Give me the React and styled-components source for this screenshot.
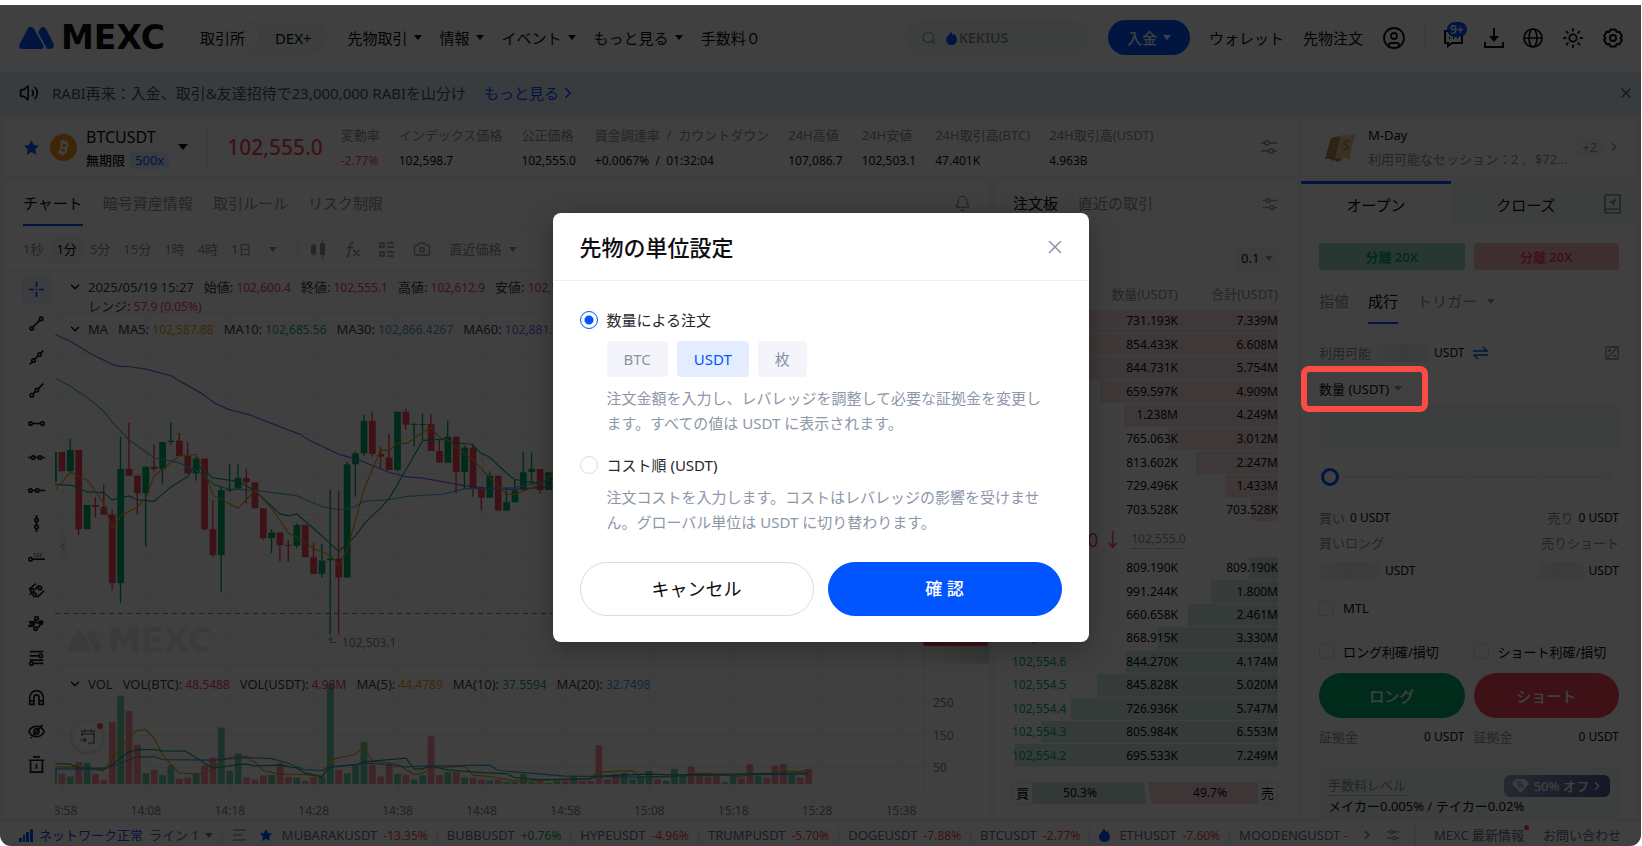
import React, {useState} from 'react';
import styled, {createGlobalStyle} from 'styled-components';
import {
  Bell, Camera, ChevronDown, ChevronRight, CircleUser, Globe, Search, Sun, Volume2, X,
} from 'lucide-react';

const colors = {
  text: '#0d0d12',
  sub: '#8a93a3',
  line: '#eef0f4',
  fill: '#f2f6f5',
  blue: '#0055ff',
  green: '#03ad6b',
  red: '#f6465d',
}

const GlobalStyle = createGlobalStyle`
    * { box-sizing: border-box; }
    body {
        margin: 0;
        background: #fff;
        color: ${colors.text};
        font-family: 'Noto Sans', 'Noto Sans CJK JP', sans-serif;
        font-size: 13px;
        line-height: 18px;
    }
    button, input, select { font: inherit; color: inherit; }
    button { border: 0; padding: 0; background: none; cursor: pointer; white-space: nowrap; }
    a { color: inherit; text-decoration: none; white-space: nowrap; }
    svg { display: block; flex: none; }
`;

const Page = styled.div`
    height: 100vh;
    padding: 5px 1px 0 0;
    background: #fff;
`;
const Window = styled.div`
    position: relative;
    display: flex;
    flex-direction: column;
    height: 100%;
    overflow: hidden;
    border-radius: 0 0 11px 11px;
    background: #f5f6f8;
`;
const Caret = styled.span`
    flex: none;
    width: 0;
    height: 0;
    border: ${({$size}) => $size || 4}px solid transparent;
    border-top: ${({$size}) => ($size || 4) + 1}px solid ${({$color}) => $color || 'currentColor'};
    border-bottom: 0;
`;
const Divider = styled.span`
    flex: none;
    width: 1px;
    height: ${({$h}) => $h}px;
    background: #e6e8ed;
`;
const Spacer = styled.span`
    flex: 1;
`;

/* header */
const Header = styled.header`
    display: flex;
    align-items: center;
    flex: none;
    height: 67px;
    padding: 0 18px 2px 19px;
    background: #fff;
    font-size: 15px;
    line-height: 22px;
    white-space: nowrap;
`;
const Brand = styled.a`
    display: flex;
    align-items: center;
    gap: 7px;
    font: 700 33px/32px 'DejaVu Sans', sans-serif;
    margin-right: 20px;
`;
const Switch = styled.div`
    display: flex;
    border-radius: 16px;
    background: ${colors.fill};
`;
const SwitchItem = styled.a`
    padding: 4px 14px;
    border: 1px solid ${({$active}) => ($active ? colors.line : 'transparent')};
    border-radius: 16px;
    background: ${({$active}) => ($active ? '#fff' : 'transparent')};
`;
const Nav = styled.nav`
    display: flex;
    gap: 18px;
    margin-left: 21px;
`;
const NavItem = styled.a`
    display: flex;
    align-items: center;
    gap: 6px;
`;
const SearchBox = styled.label`
    display: flex;
    align-items: center;
    width: 185px;
    height: 34px;
    padding: 0 16px;
    border-radius: 17px;
    background: ${colors.fill};
    color: ${colors.sub};
    gap: 9px;
`;
const SearchInput = styled.input`
    width: 100px;
    margin-left: -7px;
    padding: 0;
    border: 0;
    background: none;
    outline: 0;
    font-weight: 600;
    font-size: 14px;
    &::placeholder { color: ${colors.sub}; opacity: 1; }
`;
const Deposit = styled.button`
    display: flex;
    align-items: center;
    gap: 6px;
    height: 35px;
    margin: 0 19px 0 18px;
    padding: 0 19px;
    border-radius: 18px;
    background: ${colors.blue};
    color: #fff;
    font-weight: 500;
`;
const HeaderLinks = styled.div`
    display: flex;
    align-items: center;
    gap: 19px;
    margin-right: 18px;
`;
const HeaderIcons = styled.div`
    display: flex;
    align-items: center;
    gap: 19px;
    margin-left: 18px;
`;
const IconButton = styled.button`
    position: relative;
    display: flex;
    color: ${({$color}) => $color || 'inherit'};
`;
const Count = styled.span`
    position: absolute;
    left: 4px;
    top: -6px;
    padding: 0 3px;
    border-radius: 8px;
    background: ${colors.blue};
    color: #fff;
    font-size: 12px;
    font-weight: 600;
    line-height: 15px;
`;

/* announcement */
const Notice = styled.div`
    display: flex;
    align-items: center;
    flex: none;
    height: 43px;
    padding: 0 7px 2px 19px;
    background: #e0edfc;
    font-size: 15px;
    line-height: 22px;
    white-space: nowrap;
`;
const NoticeText = styled.span`
    margin: 0 18px 0 13px;
    color: #4c525e;
`;
const MoreLink = styled.a`
    display: flex;
    align-items: center;
    color: ${colors.blue};
`;

/* workspace */
const Workspace = styled.main`
    display: grid;
    grid-template-columns: minmax(0, 1fr) 303px 336px;
    grid-template-rows: 58px minmax(0, 1fr);
    gap: 5px 4px;
    flex: 1;
    min-height: 0;
    padding: 3px 4px 0;
`;
const Ticker = styled.section`
    display: flex;
    align-items: center;
    grid-column: span 2;
    padding: 0 19px 0 19px;
    background: #fff;
    white-space: nowrap;
`;
const Symbol = styled.div`
    display: flex;
    flex-direction: column;
    gap: 4px;
    margin: 0 9px 0 9px;
`;
const SymbolName = styled.h1`
    margin: 0;
    font-size: 16px;
    font-weight: 400;
    line-height: 22px;
`;
const SymbolMeta = styled.div`
    display: flex;
    gap: 5px;
    font-weight: 500;
    line-height: 17px;
`;
const Leverage = styled.span`
    padding: 0 5px;
    border-radius: 3px;
    background: #e3eeff;
    color: ${colors.blue};
    font-weight: 400;
`;
const LastPrice = styled.strong`
    margin: 0 18px 0 19px;
    color: ${colors.red};
    font-size: 21px;
    font-weight: 500;
    line-height: 30px;
`;
const Stats = styled.dl`
    display: flex;
    gap: 19px;
    margin: 0;
    padding-top: 2px;
`;
const StatLabel = styled.dt`
    color: ${colors.sub};
    line-height: 25px;
`;
const StatValue = styled.dd`
    margin: 0;
    color: ${({$color}) => $color || colors.text};
    font-size: 12px;
    line-height: 25px;
`;
const Promo = styled.section`
    display: flex;
    align-items: center;
    padding: 0 16px 0 24px;
    background: #fff;
`;
const PromoText = styled.div`
    flex: 1;
    min-width: 0;
    margin: 0 2px 0 12px;
    line-height: 24px;
    p {
        margin: 0;
        white-space: nowrap;
    }
    p + p { color: ${colors.sub}; }
`;
const PromoCount = styled.span`
    padding: 1px 7px;
    margin-right: 3px;
    border-radius: 11px;
    background: ${colors.fill};
    color: ${colors.sub};
`;
const Panel = styled.section`
    display: flex;
    flex-direction: column;
    min-width: 0;
    min-height: 0;
    overflow: hidden;
    background: #fff;
`;
const PanelTabs = styled.div`
    display: flex;
    align-items: stretch;
    gap: 20px;
    flex: none;
    height: 46px;
    padding: 0 19px;
    border-bottom: 1px solid ${colors.line};
    font-size: 15px;
    ${IconButton} { align-items: center; }
`;
const PanelTab = styled.button`
    border-bottom: 2px solid ${({$line}) => ($line ? colors.blue : 'transparent')};
    color: ${({$active}) => ($active ? colors.text : colors.sub)};
`;

/* chart */
const ChartTools = styled.div`
    display: flex;
    align-items: center;
    flex: none;
    height: 45px;
    padding-left: 13px;
    border-bottom: 1px solid ${colors.line};
    color: ${colors.sub};
`;
const Interval = styled.button`
    margin-right: 1px;
    padding: 4px 6px;
    border-radius: 3px;
    background: ${({$active}) => ($active ? colors.fill : 'transparent')};
    color: ${({$active}) => ($active ? colors.text : 'inherit')};
`;
const ToolIcons = styled.div`
    display: flex;
    align-items: center;
    gap: 19px;
    margin-left: 13px;
`;
const PriceType = styled.button`
    display: flex;
    align-items: center;
    gap: 7px;
`;
const ChartBody = styled.div`
    display: flex;
    flex: 1;
    min-height: 0;
`;
const DrawTools = styled.div`
    display: flex;
    flex-direction: column;
    align-items: center;
    justify-content: space-between;
    flex: none;
    width: 51px;
    padding: 3px 4px 41px 18px;
    hr {
        width: 28px;
        margin: 0;
        border: 0;
        border-top: 1px solid ${colors.line};
    }
`;
const DrawTool = styled.button`
    display: grid;
    place-items: center;
    width: 29px;
    height: ${({$active}) => ($active ? 29 : 27)}px;
    border-radius: 3px;
    background: ${({$active}) => ($active ? '#edf3f8' : 'transparent')};
    color: ${({$active}) => ($active ? colors.blue : '#16181d')};
`;
const Canvas = styled.div`
    position: relative;
    flex: 1;
    min-width: 0;
`;
const ChartSvg = styled.svg`
    width: 100%;
    height: 100%;
    font-size: 13px;
`;
const Legend = styled.div`
    position: absolute;
    left: 13px;
    top: ${({$top}) => $top}px;
    display: flex;
    gap: 6px;
    white-space: nowrap;
`;
const LegendItems = styled.div`
    display: flex;
    flex-wrap: wrap;
    gap: 0 10px;
    max-width: ${({$max}) => $max}px;
    color: #3a3f48;
    b {
        font-size: 12px;
        font-weight: 400;
    }
`;
const NewsButton = styled.button`
    position: absolute;
    left: 17px;
    top: 449px;
    display: grid;
    place-items: center;
    width: 31px;
    height: 31px;
    border-radius: 50%;
    background: #fff;
    color: #5b6270;
    box-shadow: 0 1px 4px rgba(0, 0, 0, 0.25);
    &::after {
        content: '';
        position: absolute;
        right: 0;
        top: 2px;
        width: 6px;
        height: 6px;
        border-radius: 50%;
        background: ${colors.red};
    }
`;

/* order book */
const BookTools = styled.div`
    display: flex;
    justify-content: flex-end;
    align-items: center;
    flex: none;
    height: 50px;
    padding: 12px 18px 0;
`;
const Precision = styled.label`
    display: flex;
    align-items: center;
    padding: 0 6px;
    height: 25px;
    border-radius: 3px;
    background: ${colors.fill};
    color: ${colors.sub};
    select {
        width: 24px;
        padding: 0;
        border: 0;
        background: none;
        color: ${colors.text};
        appearance: none;
    }
`;
const BookTable = styled.table`
    width: 266px;
    height: ${({$h}) => $h}px;
    margin: 0 18px;
    border-collapse: collapse;
    table-layout: fixed;
    font-size: 12px;
    th {
        padding: 0;
        color: ${colors.sub};
        font-size: 13px;
        font-weight: 400;
        text-align: right;
        white-space: nowrap;
    }
    th:first-child { text-align: left; }
`;
const BookRow = styled.tr`
    border-bottom: 1px solid #fff;
    td {
        padding: 0;
        text-align: right;
        line-height: 20px;
    }
    td:first-child {
        color: ${({$side}) => colors[$side]};
        text-align: left;
    }
`;
const BookPrice = styled.div`
    display: flex;
    align-items: center;
    gap: 9px;
    flex: none;
    height: 35px;
    padding: 0 18px;
    color: ${colors.red};
    font-size: 19px;
`;
const MarkPrice = styled.span`
    border-bottom: 1px dotted ${colors.sub};
    color: ${colors.sub};
    font-size: 12px;
`;
const Ratio = styled.div`
    display: flex;
    width: 266px;
    height: 22px;
    margin: 14px 18px 0;
    line-height: 22px;
    font-size: 12px;
`;
const RatioSide = styled.span`
    width: 21px;
    border: 1px solid #e2e5ea;
    line-height: 20px;
    font-size: 13px;
    text-align: center;
`;
const RatioBar = styled.span`
    flex: 1;
    padding-left: ${({$side}) => ($side === 'green' ? 0 : 16)}px;
    padding-right: ${({$side}) => ($side === 'green' ? 20 : 0)}px;
    background: ${({$side}) => ($side === 'green' ? '#c6e4d8' : '#f8d4d6')};
    clip-path: ${({$side}) => ($side === 'green'
      ? 'polygon(0 0, calc(100% - 3px) 0, 100% 100%, 0 100%)'
      : 'polygon(1px 0, 100% 0, 100% 100%, 4px 100%)')};
    text-align: center;
`;

/* trade form */
const TradeTabs = styled.div`
    display: flex;
    flex: none;
    height: 45px;
    background: ${colors.fill};
    font-size: 15px;
`;
const TradeTab = styled.button`
    width: 150px;
    border-top: 3px solid ${({$active}) => ($active ? colors.blue : 'transparent')};
    background: ${({$active}) => ($active ? '#fff' : 'transparent')};
`;
const TradeForm = styled.form`
    display: flex;
    flex-direction: column;
    padding: 17px 18px 0;
`;
const Pair = styled.div`
    display: grid;
    grid-template-columns: 1fr 1fr;
    gap: 9px;
    flex: none;
`;
const MarginMode = styled.button`
    height: 27px;
    border-radius: 3px;
    background: ${({$side}) => ($side === 'green' ? '#a5dbc5' : '#f6c0c4')};
    color: ${({$side}) => colors[$side]};
    font-weight: 600;
`;
const OrderTypes = styled.div`
    display: flex;
    gap: 19px;
    height: 36px;
    margin-top: 18px;
    border-bottom: 1px solid ${colors.line};
    font-size: 15px;
    flex: none;
    color: ${colors.sub};
`;
const OrderType = styled.button`
    display: flex;
    align-items: center;
    gap: 10px;
    padding-bottom: 8px;
    height: 36px;
    border-bottom: 2px solid ${({$active}) => ($active ? colors.blue : 'transparent')};
    color: ${({$active}) => ($active ? colors.text : 'inherit')};
`;
const Line = styled.div`
    display: flex;
    align-items: center;
    justify-content: space-between;
    flex: none;
    height: ${({$h}) => $h || 25}px;
    span { color: ${colors.sub}; }
`;
const Amount = styled.div`
    display: flex;
    align-items: center;
    font-size: 12px;
    gap: 5px;
    span { font-size: 13px; }
`;
const Masked = styled.i`
    width: ${({$w}) => $w}px;
    height: 18px;
    background: linear-gradient(90deg, #f6f7fa, #e9ebf0 45%, #f4f5f8);
`;
const UnitRow = styled.div`
    display: flex;
    align-items: center;
    height: 33px;
    flex: none;
`;
const UnitButton = styled.button`
    position: relative;
    display: flex;
    align-items: center;
    gap: 5px;
`;
const Highlight = styled.span`
    position: absolute;
    z-index: 11;
    top: -14px;
    left: -18px;
    width: 127px;
    height: 46px;
    border: 6px solid #fa4b46;
    border-radius: 8px;
`;
const AmountInput = styled.input`
    flex: none;
    width: 100%;
    height: 45px;
    padding: 0 12px;
    border: 0;
    border-radius: 3px;
    background: ${colors.fill};
`;
const SliderBox = styled.div`
    position: relative;
    flex: none;
    height: 54px;
    padding: 0 2px;
`;
const Dots = styled.div`
    position: absolute;
    inset: 23px 7px auto 7px;
    display: flex;
    justify-content: space-between;
    background: linear-gradient(${colors.line}, ${colors.line}) 0 3px / 100% 2px no-repeat;
    i {
        width: 8px;
        height: 8px;
        border: 2px solid ${colors.line};
        border-radius: 50%;
        background: #fff;
    }
`;
const Slider = styled.input`
    position: relative;
    width: 100%;
    height: 54px;
    margin: 0;
    background: none;
    appearance: none;
    &::-webkit-slider-thumb {
        width: 18px;
        height: 18px;
        border: 3px solid ${colors.blue};
        border-radius: 50%;
        background: #fff;
        appearance: none;
    }
`;
const Check = styled.label`
    display: flex;
    align-items: center;
    gap: 9px;
    flex: none;
    height: ${({$h}) => $h}px;
    white-space: nowrap;
    input {
        width: 15px;
        height: 15px;
        margin: 0;
        border: 1px solid #dfe3e9;
        border-radius: 2px;
        appearance: none;
    }
`;
const Submit = styled.button`
    height: 45px;
    border-radius: 23px;
    background: ${({$side}) => colors[$side]};
    color: #fff;
    font-size: 15px;
    font-weight: 500;
`;
const FeeCard = styled.div`
    margin-top: 10px;
    padding: 8px 9px;
    border-radius: 6px;
    background: ${colors.fill};
    white-space: nowrap;
`;
const FeeTitle = styled.span`
    border-bottom: 1px dotted ${colors.sub};
    line-height: 20px;
`;
const FeeBadge = styled.a`
    display: flex;
    align-items: center;
    gap: 5px;
    height: 22px;
    padding: 0 6px 0 8px;
    border-radius: 6px;
    background: linear-gradient(100deg, #93a3c8, #4a5f93);
    color: #fff;
    font-weight: 500;
`;

/* status bar */
const StatusBar = styled.footer`
    display: flex;
    align-items: center;
    flex: none;
    height: 27px;
    padding: 4px 20px 0 19px;
    border-top: 1px solid #e6e8ed;
    background: #fff;
    color: #6b7280;
    white-space: nowrap;
`;
const Quote = styled.a`
    display: flex;
    gap: 6px;
    margin-right: 9px;
    padding-right: 9px;
    border-right: 1px solid #d9dce2;
    line-height: 15px;
    b {
        color: ${({$up}) => ($up ? colors.green : colors.red)};
        font-size: 12px;
        font-weight: 400;
    }
`;
const Group = styled.div`
    display: flex;
    align-items: center;
    gap: ${({$gap}) => $gap}px;
    margin-right: 9px;
`;
const NewsLink = styled.a`
    position: relative;
    margin: 0 19px 0 18px;
    &::after {
        content: '';
        position: absolute;
        right: -5px;
        top: -1px;
        width: 5px;
        height: 5px;
        border-radius: 50%;
        background: ${colors.red};
    }
`;

/* dialog */
const Overlay = styled.div`
    position: absolute;
    inset: 0;
    z-index: 10;
    display: flex;
    align-items: center;
    justify-content: center;
    padding-top: 4px;
    background: rgba(0, 0, 0, 0.75);
`;
const Dialog = styled.div`
    width: 536px;
    border-radius: 8px;
    background: #fff;
    box-shadow: 0 6px 28px rgba(0, 0, 0, 0.3);
`;
const DialogHeader = styled.div`
    display: flex;
    align-items: center;
    justify-content: space-between;
    height: 68px;
    padding: 0 23px 0 27px;
    border-bottom: 1px solid #eff0f6;
    h2 {
        margin: 0;
        font-size: 22px;
        font-weight: 500;
        line-height: 32px;
    }
`;
const DialogBody = styled.div`
    padding: 27px 27px 26px;
    font-size: 15px;
`;
const RadioLabel = styled.label`
    display: flex;
    align-items: center;
    gap: 9px;
    color: #26282e;
    line-height: 24px;
`;
const Radio = styled.input`
    width: 18px;
    height: 18px;
    margin: 0;
    border: 1px solid #d5ddea;
    border-radius: 50%;
    appearance: none;
    &:checked {
        border-color: ${colors.blue};
        background: radial-gradient(circle, ${colors.blue} 0 4px, #fff 5px);
    }
`;
const Units = styled.div`
    display: flex;
    gap: 9px;
    margin: 9px 0 9px 27px;
`;
const Unit = styled.button`
    height: 36px;
    padding: 0 17px;
    border-radius: 4px;
    background: ${({$active}) => ($active ? '#e3edff' : '#f4f5fa')};
    color: ${({$active}) => ($active ? colors.blue : colors.sub)};
    font-size: 15px;
`;
const Hint = styled.p`
    margin: 0 0 ${({$gap}) => $gap}px 27px;
    color: #8d97a8;
    line-height: 25px;
`;
const Actions = styled.div`
    display: grid;
    grid-template-columns: 1fr 1fr;
    gap: 14px;
`;
const Action = styled.button`
    height: 54px;
    border: 1px solid ${({$primary}) => ($primary ? colors.blue : '#d5ddea')};
    border-radius: 27px;
    background: ${({$primary}) => ($primary ? colors.blue : '#fff')};
    color: ${({$primary}) => ($primary ? '#fff' : colors.text)};
    font-size: ${({$primary}) => ($primary ? 17 : 18)}px;
    font-weight: ${({$primary}) => ($primary ? 500 : 400)};
`;

const LogoMark = ({width = 35, fill = colors.blue}) => (
  <svg width={width} height="22" viewBox="0 0 35 22" fill={fill}>
    <path d="M8.600 1.800a3.600 3.600 0 0 1 6.300 0l9.400 16.400c.9 1.600 0 3.800-2 3.800H3.200C.7 22-.6 19.500.5 17.400z" />
    <path d="M19.200 5.500l1.700-3.500a3.500 3.500 0 0 1 6.200-.1l7.400 14.700c1.200 2.500-.4 5.400-3.200 5.400h-3.200z" />
  </svg>
)

const Star = ({size = 17}) => (
  <svg width={size} height={size} viewBox="0 0 24 24" fill={colors.blue}>
    <path d="M12 1.500l3.300 6.900 7.500 1-5.500 5.200 1.400 7.500L12 18.500l-6.700 3.600 1.400-7.500L1.200 9.400l7.500-1z" />
  </svg>
)

const Flame = () => (
  <svg width="11" height="14" viewBox="0 0 11 14" fill={colors.blue}>
    <path d="M5 0c.3 2 1.500 2.800 2 4 .6-.3.9-.7 1-1.200 1.500 1.700 3 3.700 3 6.200A5 5 0 0 1 5.500 14 5.200 5.200 0 0 1 0 8.800C0 5.500 3.800 4 5 0z" />
  </svg>
)

const SlidersIcon = ({size = 17}) => (
  <svg width={size} height={size} viewBox="0 0 18 18" fill="none" stroke={colors.sub} strokeWidth="1.500">
    <path d="M1 5h4M9 5h8M1 13h8M13 13h4" />
    <circle cx="7" cy="5" r="2.200" />
    <circle cx="11" cy="13" r="2.200" />
  </svg>
)

const Bitcoin = () => (
  <svg width="27" height="27" viewBox="0 0 27 27">
    <circle cx="13.500" cy="13.500" r="13.500" fill="#f7931a" />
    <g transform="rotate(12 13.500 13.500)" fill="none" stroke="#fff" strokeWidth="2.200">
      <path d="M9 8.500h5.500a2.400 2.400 0 0 1 0 5H11m3.500 0a2.700 2.700 0 0 1 0 5.300H9M11.200 8.500v10" />
      <path d="M11.800 5.800v2.500M14.800 5.800v2.500M11.800 19v2.500M14.800 19v2.500" strokeWidth="1.500" />
    </g>
  </svg>
)

const Ticket = () => (
  <svg width="31" height="31" viewBox="0 0 31 31">
    <path d="M6 6l9-2 2 24-5 2-2-2-3 1-2-2-5 0z" fill="#b98a4c" />
    <path d="M16 2l2 2 3-2 2 2 7-2-6 26-4-2-3 1-7-1z" fill="#e8c58e" />
    <path d="M24 10c-2-2-5-1-5 1s4 2 4 4-4 3-5 1" fill="none" stroke="#b98a4c" strokeWidth="1.800" />
  </svg>
)

// one entry per button of the drawing column
const drawIcons = [
  <path d="M10 1v6M10 13v6M1 10h6M13 10h6M9 10h2M10 9v2" />,
  <><path d="M6 14l8-8" /><circle cx="4.500" cy="15.500" r="2" /><circle cx="15.500" cy="4.500" r="2" /></>,
  <><path d="M2 18l3-3M8 12l4-4M15 5l3-3" /><circle cx="6.500" cy="13.500" r="2" /><circle cx="13.500" cy="6.500" r="2" /></>,
  <><path d="M6 14l3-3M12 8l6-6" /><circle cx="4.500" cy="15.500" r="2" /><circle cx="10.500" cy="9.500" r="2" /></>,
  <><path d="M5 10h10" /><circle cx="3" cy="10" r="2" /><circle cx="17" cy="10" r="2" /></>,
  <><path d="M0 10h4M8 10h4M16 10h4" /><circle cx="6" cy="10" r="2" /><circle cx="14" cy="10" r="2" /></>,
  <><path d="M5 10h4M13 10h7" /><circle cx="3" cy="10" r="2" /><circle cx="11" cy="10" r="2" /></>,
  <><path d="M10 0v4M10 8v4M10 16v4" /><circle cx="10" cy="6" r="2" /><circle cx="10" cy="14" r="2" /></>,
  <><path d="M5 12h15" /><circle cx="3" cy="12" r="2" /><text x="6" y="9" fontSize="6" fill="currentColor" stroke="none">123</text></>,
  <><path d="M1 9l8-7M11 18l8-8M2 15l3-3M8 9l5-5" /><circle cx="5" cy="10" r="2" /><circle cx="14" cy="7" r="2" /><circle cx="8" cy="15" r="2" /></>,
  <><path d="M1 8h6M13 3l-2 1M5 12l4-7M12 15l4-6M0 13h5M8 9l10-1" /><circle cx="10" cy="4" r="2" /><circle cx="5" cy="11" r="2" /><circle cx="15" cy="9" r="2" /><circle cx="9" cy="16" r="2" /></>,
  <><path d="M2 3h16M2 8h11M2 13h16M6 17h12M17 8h1" /><circle cx="15" cy="8" r="2" /><circle cx="4" cy="17" r="2" /></>,
]
const utilityIcons = [
  <path d="M2 18v-8a8 8 0 0 1 16 0v8h-5v-8a3 3 0 0 0-6 0v8zM2 14h5M13 14h5" />,
  <><path d="M1 10c3-8 15-8 18 0-3 8-15 8-18 0zM3 18L17 2" /><circle cx="10" cy="10" r="3" /></>,
  <path d="M3 5h14v14H3zM1 5h18M6 1h8M10 9v6" />,
]

const DrawIcon = ({children}) => (
  <svg width="17" height="17" viewBox="0 0 20 20" fill="none" stroke="currentColor" strokeWidth="2">{children}</svg>
)

// [color, body top, body bottom, wick top, wick bottom]
const candles = [
  ['g', 36, 126, 36, 126], ['r', 36, 94, 36, 94], ['g', 30, 94, -4, 94], ['r', 30, 268, 30, 286],
  ['g', 195, 268, 195, 268], ['r', 195, 201, 172, 232], ['r', 201, 224, 134, 224], ['r', 224, 430, 208, 452],
  ['g', 87, 430, -10, 490], ['r', 87, 107, -51, 107], ['r', 107, 160, 107, 224], ['g', 80, 160, 80, 320],
  ['r', 80, 87, 13, 94], ['g', 6, 87, 6, 130], ['g', 2, 6, -52, 14], ['r', 2, 48, -21, 48],
  ['r', 48, 100, 6, 100], ['g', 56, 100, 50, 122], ['r', 56, 268, 56, 272], ['r', 268, 345, 180, 352],
  ['g', 150, 345, 138, 456], ['g', 148, 152, 73, 156], ['g', 114, 145, 73, 150], ['r', 114, 127, 86, 190],
  ['r', 127, 205, 127, 205], ['r', 205, 295, 205, 299], ['g', 278, 295, 268, 340], ['r', 278, 316, 278, 365],
  ['r', 315, 318, 300, 365], ['g', 255, 318, 250, 326], ['r', 255, 352, 255, 352], ['r', 352, 402, 308, 402],
  ['g', 362, 402, 311, 413], ['g', 356, 361, 150, 584], ['r', 356, 413, 153, 584], ['g', 73, 413, 66, 413],
  ['g', 40, 73, 34, 170], ['g', -57, 40, -75, 48], ['r', -57, 42, -85, 50], ['r', 42, 50, 20, 85],
  ['r', 53, 90, -18, 90], ['g', -85, 90, -85, 94], ['r', -85, -46, -94, -30], ['g', -48, -45, -52, 20],
  ['g', -48, -45, -80, 0], ['r', -48, 33, -78, 33], ['r', 33, 68, 0, 68], ['g', -10, 68, -58, 68],
  ['r', -10, 96, -10, 160], ['g', 23, 96, 16, 148], ['r', 23, 146, 10, 170], ['r', 146, 173, 140, 212],
  ['g', 107, 173, 94, 173], ['r', 107, 212, 107, 212], ['g', 187, 212, 148, 212], ['g', 152, 187, 118, 187],
  ['g', 97, 150, 36, 150], ['g', 87, 96, 38, 130], ['r', 87, 150, 87, 160], ['g', 97, 150, 97, 150],
]

const volumes = `g48 r30 g23 r67 g64 r30 r14 r187 g266 r220 r118 g33 r43 g27 g57 r16 r19 g31 r57 r80 g170
g40 g93 r20 r14 r26 g28 r63 r22 g20 r10 r20 g21 g303 r43 g33 g59 g127 r59 r23 r62 g31 r28 g14 g27 r144
r27 g36 r37 g20 r19 r14 g11 r13 g7 g7 g31 g7 r13 g4 g11 r11 g26 r10 r10 r117 r15 r31 g34 g15 g24 g40 r16
g10 g46 g26 r53 r27 r23 r29 g6 g26 r17 r60 g24 r20 r56 r60 g31 r20 r46`.split(/\s+/)

const priceLines = [
  ['#8b5cf0', '155,-317 200,-295 260,-255 320,-225 340,-221 365,-220 408,-213 480,-193 505,-176 560,-143 600,-112 640,-92 700,-75 840,-17 865,0 950,43 1000,58 1090,97 1140,111 1180,114 1300,137 1372,146 1440,148 1500,144 1550,140'],
  ['#4fb8dc', '155,-186 197,-162 220,-144 244,-128 290,-87 320,-47 362,0 432,54 500,68 550,92 600,134 640,147 714,151 830,167 900,199 950,210 995,200 1020,184 1090,179 1140,169 1240,163 1300,147 1440,143 1500,130 1550,118'],
  ['#16a874', '155,133 200,136 244,156 290,158 314,180 361,168 385,180 432,184 480,140 526,110 549,70 596,114 667,124 714,152 784,222 808,228 831,222 878,265 949,335 996,288 1020,252 1066,204 1090,176 1140,84 1184,2 1215,-2 1254,-1 1254,8 1320,12 1348,40 1372,52 1419,100 1440,118 1513,132 1550,114'],
  ['#e9a313', '155,150 197,97 244,120 291,190 314,264 338,228 385,201 408,175 432,107 502,48 549,43 573,90 596,165 667,205 714,152 761,205 808,280 855,305 878,327 925,345 949,378 972,330 996,240 1019,150 1066,30 1090,32 1113,10 1140,10 1207,-38 1231,-8 1254,0 1325,60 1395,138 1419,162 1442,163 1513,134 1550,100'],
]
const volumeLines = [
  ['#e9a313', '155,381 220,382 290,393 314,360 361,290 385,272 408,269 432,295 455,345 502,400 560,402 596,392 620,358 667,348 690,350 714,367 737,392 784,403 860,404 902,413 925,360 995,343 1019,318 1043,365 1090,368 1113,373 1160,404 1184,400 1207,385 1301,379 1325,406 1372,410 1440,423 1652,417 1676,397 1770,392 1793,410 1864,412 1911,407 1934,402 1982,400 2075,412 2099,403 2152,402 2193,392 2240,395 2263,390'],
  ['#16a874', '155,371 197,373 220,384 300,385 361,336 385,329 432,329 455,333 520,334 596,385 667,374 690,373 714,378 784,376 830,384 855,400 902,410 925,382 995,375 1019,366 1137,355 1160,387 1184,387 1207,378 1254,390 1348,398 1419,401 1440,413 1513,419 1652,417 1676,409 1817,403 1887,405 1934,404 2263,399'],
  ['#3f9fd8', '155,387 290,388 314,380 385,350 408,352 432,350 455,359 596,361 690,353 760,356 808,370 850,389 902,392 925,380 1043,370 1137,381 1184,379 1372,376 1395,392 1513,402 1582,409 1793,412 1934,407 2263,403'],
]

const times = ['13:58', '14:08', '14:18', '14:28', '14:38', '14:48', '14:58', '15:08', '15:18', '15:28', '15:38']
const tone = {g: colors.green, r: colors.red}

const Chart = () => (
  <ChartSvg viewBox="55 272 935 547" preserveAspectRatio="xMinYMin meet">
    <g stroke="#edeff2">
      {[312, 353, 393, 433, 473, 514, 555, 595, 636, 664, 702, 735, 767, 794].map(y => (
        <path key={y} d={`M55 ${y}.5H924`} />
      ))}
      {times.map((t, i) => <path key={t} d={`M${Math.round(62 + i * 83.9)}.5 272V796`} />)}
      <path d="M924.500 272V794" />
    </g>
    <g fill="#e6e9ed">
      <g transform="translate(67 630)"><LogoMark fill="#e6e9ed" /></g>
      <text x="108" y="652" fontSize="33" fontWeight="700" fontFamily="DejaVu Sans">MEXC</text>
    </g>
    <linearGradient id="fade"><stop offset="0" stopColor="#fff" /><stop offset="1" stopColor="#cfe6dd" /></linearGradient>
    <rect x="925" y="560" width="64" height="104" fill="url(#fade)" />
    <rect x="923" y="624" width="65" height="22" rx="3" fill={colors.red} />
    <g transform="translate(0 440) scale(0.357 0.333)">
      {candles.map(([c, top, bottom, high, low], i) => (
        <g key={i} fill={tone[c]}>
          <rect x={147.5 + i * 23.5} y={high} width="4" height={low - high} />
          <rect x={140.5 + i * 23.5} y={top} width="19" height={bottom - top} />
        </g>
      ))}
      {priceLines.map(([color, points]) => (
        <polyline key={color} points={points} fill="none" stroke={color} strokeWidth="1.200" vectorEffect="non-scaling-stroke" />
      ))}
    </g>
    <g transform="translate(0 640) scale(0.357 0.333)">
      {volumes.map((v, i) => (
        <rect key={i} x={140.5 + i * 23.5} y={433 - v.slice(1)} width="19" height={v.slice(1)} fill={tone[v[0]]} opacity="0.6" />
      ))}
      {volumeLines.map(([color, points]) => (
        <polyline key={color} points={points} fill="none" stroke={color} strokeWidth="1.200" vectorEffect="non-scaling-stroke" />
      ))}
    </g>
    <path d="M55 613.500H924" stroke={colors.red} strokeDasharray="5 4" />
    <path d="M330.500 638v4.500h6M328 640l2.500-2.500 2.500 2.500" fill="none" stroke="#7d8490" />
    <g fill="#7d8490">
      <text x="342" y="647" fontSize="12">102,503.1</text>
      <text x="933" y="707" fontSize="12">250</text>
      <text x="933" y="740" fontSize="12">150</text>
      <text x="933" y="772" fontSize="12">50</text>
      {times.map((t, i) => (
        <text key={t} x={62 + i * 83.9} y="815" fontSize="12" textAnchor="middle">{t}</text>
      ))}
    </g>
    <rect x="59" y="532" width="8" height="28" rx="4" fill="#f0f2f5" />
    <path d="M64 543l-2.500 3.500 2.500 3.500" fill="none" stroke={colors.sub} />
  </ChartSvg>
)

const LegendRow = ({top, max = 720, items}) => (
  <Legend $top={top}>
    <ChevronDown size={14} strokeWidth={2.5} style={{marginTop: 2}} />
    <LegendItems $max={max}>
      {items.map(([label, value, color]) => (
        <span key={label}>{label}{value && <b style={{color}}> {value}</b>}</span>
      ))}
    </LegendItems>
  </Legend>
)

const stats = [
  ['変動率', '-2.77%', colors.red],
  ['インデックス価格', '102,598.7'],
  ['公正価格', '102,555.0'],
  ['資金調達率 \u00a0/ \u00a0カウントダウン', '+0.0067% \u00a0/ \u00a001:32:04'],
  ['24H高値', '107,086.7'],
  ['24H安値', '102,503.1'],
  ['24H取引高(BTC)', '47.401K'],
  ['24H取引高(USDT)', '4.963B'],
]

const asks = [
  ['102,555.9', '731.193K', '7.339M'], ['102,555.8', '854.433K', '6.608M'], ['102,555.7', '844.731K', '5.754M'],
  ['102,555.6', '659.597K', '4.909M'], ['102,555.5', '1.238M', '4.249M'], ['102,555.4', '765.063K', '3.012M'],
  ['102,555.3', '813.602K', '2.247M'], ['102,555.2', '729.496K', '1.433M'], ['102,555.1', '703.528K', '703.528K'],
]
const bids = [
  ['102,555.0', '809.190K', '809.190K'], ['102,554.9', '991.244K', '1.800M'], ['102,554.8', '660.658K', '2.461M'],
  ['102,554.7', '868.915K', '3.330M'], ['102,554.6', '844.270K', '4.174M'], ['102,554.5', '845.828K', '5.020M'],
  ['102,554.4', '726.936K', '5.747M'], ['102,554.3', '805.984K', '6.553M'], ['102,554.2', '695.533K', '7.249M'],
]

const depth = (total, color) => {
  const value = parseFloat(total) / (total.endsWith('K') ? 1000 : 1)
  const share = Math.round(value / 7.339 * 100)
  return {background: `linear-gradient(to left, ${color} ${share}%, transparent ${share}%)`}
}

const BookSide = ({rows, side, color}) => (
  <tbody>
    {rows.map(([price, amount, total]) => (
      <BookRow key={price} $side={side} style={depth(total, color)}>
        <td>{price}</td><td>{amount}</td><td>{total}</td>
      </BookRow>
    ))}
  </tbody>
)

const BookCols = () => (
  <colgroup><col style={{width: 80}} /><col style={{width: 86}} /><col /></colgroup>
)

const OrderBook = () => (
  <Panel>
    <PanelTabs>
      <PanelTab $active>注文板</PanelTab>
      <PanelTab>直近の取引</PanelTab>
      <Spacer />
      <IconButton aria-label="板設定"><SlidersIcon size={16} /></IconButton>
    </PanelTabs>
    <BookTools>
      <Precision>
        <select aria-label="精度"><option>0.1</option></select>
        <Caret />
      </Precision>
    </BookTools>
    <BookTable $h={245}>
      <BookCols />
      <thead><tr style={{height: 33}}><th>価格(USDT)</th><th>数量(USDT)</th><th>合計(USDT)</th></tr></thead>
      <BookSide rows={asks} side="red" color="#fbdedf" />
    </BookTable>
    <BookPrice>102,555.0 ↓<MarkPrice>102,555.0</MarkPrice></BookPrice>
    <BookTable $h={211}>
      <BookCols />
      <BookSide rows={bids} side="green" color="#d2e9e1" />
    </BookTable>
    <Ratio>
      <RatioSide>買</RatioSide>
      <RatioBar $side="green">50.3%</RatioBar>
      <RatioBar $side="red">49.7%</RatioBar>
      <RatioSide>売</RatioSide>
    </Ratio>
  </Panel>
)

const TradePanel = () => (
  <Panel>
    <TradeTabs>
      <TradeTab $active>オープン</TradeTab>
      <TradeTab>クローズ</TradeTab>
      <IconButton aria-label="ガイド" $color={colors.sub} style={{alignItems: 'center', marginLeft: 3}}>
        <svg width="17" height="20" viewBox="0 0 17 20" fill="none" stroke="currentColor" strokeWidth="1.700">
          <path d="M1 17V3a2 2 0 0 1 2-2h13v18H3a2 2 0 0 1-2-2 2 2 0 0 1 2-2h13" />
          <path d="M12 5l-2.500 7-1.500-3-3-1z" fill="currentColor" strokeWidth="0.500" />
        </svg>
      </IconButton>
    </TradeTabs>
    <TradeForm onSubmit={e => e.preventDefault()}>
      <Pair>
        <MarginMode type="button" $side="green">分離 20X</MarginMode>
        <MarginMode type="button" $side="red">分離 20X</MarginMode>
      </Pair>
      <OrderTypes>
        <OrderType type="button">指値</OrderType>
        <OrderType type="button" $active>成行</OrderType>
        <OrderType type="button">トリガー<Caret /></OrderType>
      </OrderTypes>
      <Line $h={38} style={{marginTop: 10}}>
        <Amount>
          <span>利用可能</span><Masked $w={53} />USDT
          <svg width="15" height="14" viewBox="0 0 15 14" fill="none" stroke={colors.blue} strokeWidth="1.500" style={{marginLeft: 4}}>
            <path d="M0 5h14L10 1M15 9H1l4 4" />
          </svg>
        </Amount>
        <IconButton type="button" aria-label="計算機" $color={colors.sub}>
          <svg width="14" height="14" viewBox="0 0 14 14" fill="none" stroke="currentColor" strokeWidth="1.300">
            <path d="M1 1h12v12H1zM2.500 11.500l9-9M3 4.500h3M4.500 3v3M8 10h3" />
          </svg>
        </IconButton>
      </Line>
      <UnitRow>
        <UnitButton type="button">
          数量 (USDT)<Caret $color={colors.sub} />
          <Highlight />
        </UnitButton>
      </UnitRow>
      <AmountInput aria-label="数量" />
      <SliderBox>
        <Dots><i /><i /><i /><i /><i /></Dots>
        <Slider type="range" aria-label="割合" min="0" max="100" defaultValue="0" />
      </SliderBox>
      <Line $h={28}>
        <Amount><span>買い</span>0 USDT</Amount>
        <Amount><span>売り</span>0 USDT</Amount>
      </Line>
      <Line $h={22}><span>買いロング</span><span>売りショート</span></Line>
      <Line $h={33}>
        <Amount><Masked $w={61} />USDT</Amount>
        <Amount><Masked $w={46} />USDT</Amount>
      </Line>
      <Check $h={43} style={{borderBottom: `1px solid ${colors.line}`}}><input type="checkbox" />MTL</Check>
      <Pair>
        <Check $h={43}><input type="checkbox" />ロング利確/損切</Check>
        <Check $h={43}><input type="checkbox" />ショート利確/損切</Check>
      </Pair>
      <Pair>
        <Submit $side="green">ロング</Submit>
        <Submit $side="red">ショート</Submit>
      </Pair>
      <Pair>
        <Line $h={38}><span>証拠金</span><Amount>0 USDT</Amount></Line>
        <Line $h={38}><span>証拠金</span><Amount>0 USDT</Amount></Line>
      </Pair>
      <FeeCard>
        <Line $h={23}>
          <FeeTitle>手数料レベル</FeeTitle>
          <FeeBadge href="#">
            <svg width="17" height="14" viewBox="0 0 17 14" fill="#e8edf7">
              <path d="M4 0h9l4 5-8.500 9L0 5z" />
              <text x="5" y="9" fontSize="8" fill="#6c7fae">%</text>
            </svg>
            50% オフ<ChevronRight size={14} strokeWidth={2.5} style={{marginLeft: -4}} />
          </FeeBadge>
        </Line>
        メイカー0.005% / テイカー0.02%
      </FeeCard>
    </TradeForm>
  </Panel>
)

const ChartPanel = () => (
  <Panel>
    <PanelTabs>
      <PanelTab $active $line>チャート</PanelTab>
      <PanelTab>暗号資産情報</PanelTab>
      <PanelTab>取引ルール</PanelTab>
      <PanelTab>リスク制限</PanelTab>
      <Spacer />
      <IconButton aria-label="通知" $color={colors.sub}><Bell size={17} strokeWidth={1.7} /></IconButton>
    </PanelTabs>
    <ChartTools>
      {['1秒', '1分', '5分', '15分', '1時', '4時', '1日'].map(t => (
        <Interval key={t} $active={t === '1分'}>{t}</Interval>
      ))}
      <Caret style={{margin: '0 20px 0 10px'}} />
      <Divider $h={18} />
      <ToolIcons>
        <svg width="15" height="19" viewBox="0 0 15 19" fill="currentColor">
          <path d="M0 5h5v9H0zM2 3h1v13H2zM9 3h5v12H9zM11 0h1v19h-1z" />
        </svg>
        <svg width="15" height="17" viewBox="0 0 15 17" fill="none" stroke="currentColor" strokeWidth="1.500">
          <path d="M9 2c-2-1-3.500-.5-3.800 1.500L4 13c-.3 2-1.500 2.500-3 2M2 6.500h6M8.500 9l6 6M14.500 9l-6 6" />
        </svg>
        <svg width="15" height="15" viewBox="0 0 15 15" fill="none" stroke="currentColor" strokeWidth="1.500">
          <path d="M1 1h4v4H1zM1 10h4v4H1zM8 1h7M8 5h7M8 10h7M8 14h7" />
        </svg>
        <Camera size={18} strokeWidth={1.8} />
        <PriceType>直近価格<Caret /></PriceType>
      </ToolIcons>
    </ChartTools>
    <ChartBody>
      <DrawTools>
        {drawIcons.map((icon, i) => <DrawTool key={i} $active={i === 0}><DrawIcon>{icon}</DrawIcon></DrawTool>)}
        <hr />
        {utilityIcons.map((icon, i) => <DrawTool key={i}><DrawIcon>{icon}</DrawIcon></DrawTool>)}
      </DrawTools>
      <Canvas>
        <Chart />
        <LegendRow top={6} max={560} items={[
          ['2025/05/19 15:27'],
          ['始値:', '102,600.4', colors.red],
          ['終値:', '102,555.1', colors.red],
          ['高値:', '102,612.9', colors.red],
          ['安値:', '102,555.0', colors.red],
          ['レンジ:', '57.9 (0.05%)', colors.red],
        ]} />
        <LegendRow top={48} items={[
          ['MA'],
          ['MA5:', '102,587.88', '#e9a313'],
          ['MA10:', '102,685.56', '#16a874'],
          ['MA30:', '102,866.4267', '#3f9fd8'],
          ['MA60:', '102,881.1', '#8b5cf0'],
        ]} />
        <LegendRow top={403} items={[
          ['VOL'],
          ['VOL(BTC):', '48.5488', colors.red],
          ['VOL(USDT):', '4.98M', colors.red],
          ['MA(5):', '44.4789', '#e9a313'],
          ['MA(10):', '37.5594', '#16a874'],
          ['MA(20):', '32.7498', '#3f9fd8'],
        ]} />
        <NewsButton aria-label="イベント">
          <svg width="15" height="15" viewBox="0 0 15 15" fill="none" stroke="currentColor" strokeWidth="1.200">
            <path d="M2 7V2h12v12H8M2 5h12M5 0v3M11 0v3M0 11h6M4 9l2 2-2 2" />
          </svg>
        </NewsButton>
      </Canvas>
    </ChartBody>
  </Panel>
)

const UnitDialog = ({onClose}) => {
  const [mode, setMode] = useState('amount')
  const [unit, setUnit] = useState('USDT')

  return (
    <Overlay>
      <Dialog role="dialog" aria-labelledby="unit-title">
        <DialogHeader>
          <h2 id="unit-title">先物の単位設定</h2>
          <IconButton aria-label="閉じる" $color="#8d97a8" onClick={onClose}><X size={22} strokeWidth={1.7} /></IconButton>
        </DialogHeader>
        <DialogBody>
          <RadioLabel>
            <Radio type="radio" name="mode" checked={mode === 'amount'} onChange={() => setMode('amount')} />
            数量による注文
          </RadioLabel>
          <Units>
            {['BTC', 'USDT', '枚'].map(u => (
              <Unit key={u} $active={u === unit} onClick={() => setUnit(u)}>{u}</Unit>
            ))}
          </Units>
          <Hint $gap={17}>
            注文金額を入力し、レバレッジを調整して必要な証拠金を変更し<br />
            ます。すべての値は USDT に表示されます。
          </Hint>
          <RadioLabel>
            <Radio type="radio" name="mode" checked={mode === 'cost'} onChange={() => setMode('cost')} />
            コスト順 (USDT)
          </RadioLabel>
          <Hint $gap={27} style={{marginTop: 8}}>
            注文コストを入力します。コストはレバレッジの影響を受けませ<br />
            ん。グローバル単位は USDT に切り替わります。
          </Hint>
          <Actions>
            <Action onClick={onClose}>キャンセル</Action>
            <Action $primary onClick={onClose}>確 認</Action>
          </Actions>
        </DialogBody>
      </Dialog>
    </Overlay>
  )
}

const TopBar = () => (
  <Header>
    <Brand href="#"><LogoMark />MEXC</Brand>
    <Switch>
      <SwitchItem href="#" $active>取引所</SwitchItem>
      <SwitchItem href="#">DEX+</SwitchItem>
    </Switch>
    <Nav>
      {['先物取引', '情報', 'イベント', 'もっと見る'].map(n => (
        <NavItem key={n} href="#">{n}<Caret /></NavItem>
      ))}
      <NavItem href="#">手数料０</NavItem>
    </Nav>
    <Spacer />
    <SearchBox>
      <Search size={16} strokeWidth={1.6} />
      <Flame />
      <SearchInput aria-label="検索" placeholder="KEKIUS" />
    </SearchBox>
    <Deposit>入金<Caret /></Deposit>
    <HeaderLinks>
      <a href="#">ウォレット</a>
      <a href="#">先物注文</a>
      <IconButton aria-label="アカウント"><CircleUser size={24} strokeWidth={1.8} /></IconButton>
    </HeaderLinks>
    <Divider $h={27} />
    <HeaderIcons>
      <IconButton aria-label="メッセージ">
        <svg width="22" height="20" viewBox="0 0 22 20" fill="none" stroke="currentColor" strokeWidth="2">
          <path d="M6 3H2v12h3v3l4-3h10V7M6 10h1M10 10h1M14 10h1" />
        </svg>
        <Count>9+</Count>
      </IconButton>
      <IconButton aria-label="ダウンロード">
        <svg width="20" height="20" viewBox="0 0 20 20" fill="none" stroke="currentColor" strokeWidth="2">
          <path d="M1 14v5h18v-5M10 0v9" />
          <path d="M5 8h10l-5 6z" fill="currentColor" stroke="none" />
        </svg>
      </IconButton>
      <IconButton aria-label="言語">
        <svg width="20" height="20" viewBox="0 0 20 20" fill="none" stroke="currentColor" strokeWidth="1.700">
          <circle cx="10" cy="10" r="9" />
          <ellipse cx="10" cy="10" rx="4" ry="9" />
          <path d="M1 10h18" />
        </svg>
      </IconButton>
      <IconButton aria-label="テーマ"><Sun size={22} /></IconButton>
      <IconButton aria-label="設定">
        <svg width="20" height="20" viewBox="0 0 20 20" fill="none" stroke="currentColor" strokeWidth="2">
          <path d="M7.500 1.500h5l1.200 2.400 2.700-.1 2.500 4.300L17.500 10l1.400 1.900-2.500 4.300-2.700-.1-1.200 2.400h-5l-1.200-2.400-2.700.1L1.100 11.900 2.500 10 1.100 8.100l2.500-4.300 2.700.1z" strokeLinejoin="round" />
          <circle cx="10" cy="10" r="3" />
        </svg>
      </IconButton>
    </HeaderIcons>
  </Header>
)

const quotes = [
  ['MUBARAKUSDT', '-13.35%'], ['BUBBUSDT', '+0.76%'], ['HYPEUSDT', '-4.96%'], ['TRUMPUSDT', '-5.70%'],
  ['DOGEUSDT', '-7.88%'], ['BTCUSDT', '-2.77%'],
]

const Status = () => (
  <StatusBar>
    <Group $gap={6}>
      <svg width="14" height="13" viewBox="0 0 14 13" fill={colors.blue}>
        <path d="M0 9h3v4H0zM4 6h2v7H4zM7 3h3v10H7zM11 0h3v13h-3z" />
      </svg>
      <span style={{color: '#3344ee'}}>ネットワーク正常</span>
      <span>ライン 1</span>
      <Caret />
    </Group>
    <Divider $h={14} />
    <Group $gap={12} style={{marginLeft: 10}}>
      <svg width="14" height="12" viewBox="0 0 14 12" stroke="currentColor"><path d="M0 1h13M0 6h9M0 11h13" /></svg>
      <Star size={14} />
    </Group>
    {quotes.map(([name, change]) => (
      <Quote key={name} href="#" $up={change[0] === '+'}>{name}<b>{change}</b></Quote>
    ))}
    <Group $gap={0}><Flame /></Group>
    <Quote href="#">ETHUSDT<b>-7.60%</b></Quote>
    <Group $gap={12}>
      <span>MOODENGUSDT <span style={{color: colors.red}}>-</span></span>
      <ChevronRight size={14} />
      <SlidersIcon size={14} />
    </Group>
    <Spacer />
    <Divider $h={26} />
    <NewsLink href="#">MEXC 最新情報</NewsLink>
    <a href="#">お問い合わせ</a>
  </StatusBar>
)

const App = () => {
  const [open, setOpen] = useState(true)

  return (
    <>
      <GlobalStyle />
      <Page>
        <Window>
          <TopBar />
          <Notice>
            <Volume2 size={20} />
            <NoticeText>RABI再来：入金、取引&amp;友達招待で23,000,000 RABIを山分け</NoticeText>
            <MoreLink href="#">もっと見る<ChevronRight size={18} /></MoreLink>
            <Spacer />
            <IconButton aria-label="閉じる" $color="#4c525e"><X size={16} strokeWidth={1.8} /></IconButton>
          </Notice>
          <Workspace>
            <Ticker>
              <Star />
              <span style={{width: 10}} />
              <Bitcoin />
              <Symbol>
                <SymbolName>BTCUSDT</SymbolName>
                <SymbolMeta>無期限<Leverage>500x</Leverage></SymbolMeta>
              </Symbol>
              <Caret $size={5} style={{marginRight: 19}} />
              <Divider $h={44} />
              <LastPrice>102,555.0</LastPrice>
              <Stats>
                {stats.map(([label, value, color]) => (
                  <div key={label}>
                    <StatLabel>{label}</StatLabel>
                    <StatValue $color={color}>{value}</StatValue>
                  </div>
                ))}
              </Stats>
              <Spacer />
              <IconButton aria-label="表示設定"><SlidersIcon size={18} /></IconButton>
            </Ticker>
            <Promo>
              <Ticket />
              <PromoText>
                <p>M-Day</p>
                <p>利用可能なセッション：2 、$72...</p>
              </PromoText>
              <PromoCount>+2</PromoCount>
              <ChevronRight size={14} color={colors.sub} />
            </Promo>
            <ChartPanel />
            <OrderBook />
            <TradePanel />
          </Workspace>
          <Status />
          {open && <UnitDialog onClose={() => setOpen(false)} />}
        </Window>
      </Page>
    </>
  )
}

export default App;
